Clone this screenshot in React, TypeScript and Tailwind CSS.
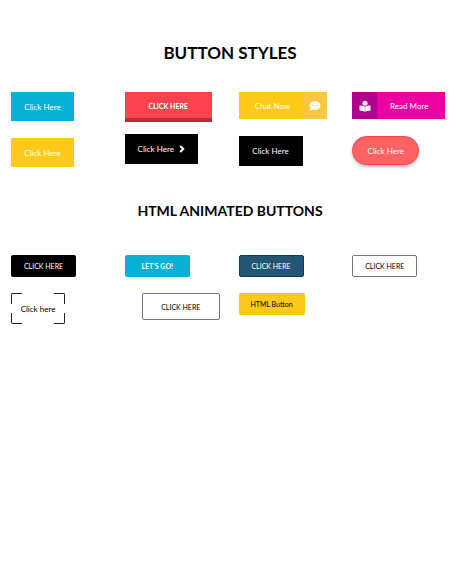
import { ReactNode } from "react";
import { clsx } from "clsx";

interface DemoButtonProps {
  className: string;
  children: ReactNode;
}

function DemoButton({ className, children }: DemoButtonProps) {
  return (
    <button
      type="button"
      className={clsx(
        "flex items-center justify-center whitespace-nowrap cursor-pointer",
        className
      )}
    >
      {children}
    </button>
  );
}

function Column({ className, children }: DemoButtonProps) {
  return (
    <div className={clsx("flex flex-col items-start", className)}>
      {children}
    </div>
  );
}

function ChatIcon() {
  return (
    <svg viewBox="0 0 12 10" className="w-3 h-[10px]" aria-hidden="true">
      <path
        d="M6 .3C3 .3.6 2.2.6 4.6c0 1 .4 1.9 1.1 2.6L.5 9.3c1.3 0 2.3-.4 3-.9.8.3 1.6.4 2.5.4 3 0 5.4-1.9 5.4-4.2S9 .3 6 .3z"
        fill="#fff"
      />
      <g fill="#ffc545">
        <circle cx="3.6" cy="4.6" r=".6" />
        <circle cx="6" cy="4.6" r=".6" />
        <circle cx="8.4" cy="4.6" r=".6" />
      </g>
    </svg>
  );
}

function ReaderIcon() {
  return (
    <svg viewBox="0 0 12 12" className="w-3 h-3" aria-hidden="true">
      <g fill="#fff">
        <circle cx="6" cy="3.2" r="2.5" />
        <path d="M5.8 6.8C4.4 6 2.600 5.600 1 5.600c-.3 0-.5.2-.5.5v4.200c0 .3.200.5.500.5 1.600 0 3.500.3 4.800.9zM6.200 6.800C7.600 6 9.400 5.600 11 5.600c.3 0 .5.2.5.5v4.200c0 .3-.2.5-.5.5-1.600 0-3.500.3-4.800.9z" />
      </g>
    </svg>
  );
}

function ChevronIcon() {
  return (
    <svg viewBox="0 0 6 8" className="w-[6px] h-2" aria-hidden="true">
      <path
        d="M1.2 1 4.2 4l-3 3"
        fill="none"
        stroke="#fff"
        strokeWidth="2"
      />
    </svg>
  );
}

// The four L-shaped corners of the bracket button
const CORNERS = [
  "top-0 left-0 border-t border-l rounded-tl-xs",
  "top-0 right-0 border-t border-r rounded-tr-xs",
  "bottom-0 left-0 border-b border-l rounded-bl-xs",
  "bottom-0 right-0 border-b border-r rounded-br-xs"
];

export default function App() {
  return (
    <main className="min-h-screen bg-white pt-[41px] font-['Lato',sans-serif] text-[8px] leading-[10px] text-black">
      <section>
        <h2 className="text-center text-[17px] leading-6 font-bold">
          BUTTON STYLES
        </h2>
        <div className="mt-[27px] grid grid-cols-4 gap-[6px] pl-[11px]">
          <Column className="gap-[17px]">
            <DemoButton className="h-[29px] w-[63px] bg-[#06b1d5] text-white">
              Click Here
            </DemoButton>
            <DemoButton className="h-[29px] w-[63px] rounded-[1px] bg-[#ffc917] text-white">
              Click Here
            </DemoButton>
          </Column>
          <Column className="gap-3">
            <DemoButton className="h-[30px] w-[87px] border-b-4 border-[#b92c3c] bg-[#ff4250] pt-[2px] text-[7px] font-bold text-white">
              CLICK HERE
            </DemoButton>
            <DemoButton className="h-[30px] w-[73px] gap-[5px] bg-black text-white">
              Click Here
              <ChevronIcon />
            </DemoButton>
          </Column>
          <Column className="gap-[17px]">
            <DemoButton className="h-[27px] bg-[#ffc917] text-white">
              <span className="w-16 pl-1">Chat Now</span>
              <span className="flex h-full w-6 items-center justify-center bg-[#ffc545]">
                <ChatIcon />
              </span>
            </DemoButton>
            <DemoButton className="h-[30px] w-16 bg-black text-white">
              Click Here
            </DemoButton>
          </Column>
          <Column className="gap-[17px]">
            <DemoButton className="h-[27px] bg-[#ec00a2] text-white">
              <span className="flex h-full w-[25px] items-center justify-center bg-[#b0008f]">
                <ReaderIcon />
              </span>
              <span className="w-[68px] pr-1">Read More</span>
            </DemoButton>
            <DemoButton className="h-[29px] w-[67px] rounded-full border border-[#ff4250] bg-[#ff6262] text-white shadow-[0_2px_3px_#00000040]">
              Click Here
            </DemoButton>
          </Column>
        </div>
      </section>

      <section className="mt-[34px]">
        <h2 className="text-center text-[14px] leading-5 font-bold">
          HTML ANIMATED BUTTONS
        </h2>
        <div className="mt-[34px] grid grid-cols-4 gap-[6px] pl-[11px]">
          <Column className="gap-4">
            <DemoButton className="h-[22px] w-[65px] rounded-xs bg-black text-[7px] text-white">
              CLICK HERE
            </DemoButton>
            <DemoButton className="relative h-[31px] w-[54px]">
              {CORNERS.map((corner) => (
                <span
                  key={corner}
                  className={clsx(
                    "absolute size-[11px] border-[#222222]",
                    corner
                  )}
                />
              ))}
              Click here
            </DemoButton>
          </Column>
          <Column className="gap-4">
            <DemoButton className="h-[22px] w-[65px] rounded-xs bg-[#06b1d5] text-[7px] font-bold text-white">
              LET'S GO!
            </DemoButton>
            <DemoButton className="ml-[17px] h-[27px] w-[78px] rounded-xs border border-[#777777] text-[7px]">
              CLICK HERE
            </DemoButton>
          </Column>
          <Column className="gap-4">
            <DemoButton className="h-[22px] w-[65px] rounded-xs border border-[#123a62] bg-[#235674] text-[7px] text-white">
              CLICK HERE
            </DemoButton>
            <DemoButton className="h-[22px] w-[66px] rounded-xs bg-[#ffc917] text-[7px]">
              HTML Button
            </DemoButton>
          </Column>
          <Column className="gap-4">
            <DemoButton className="h-[22px] w-[65px] rounded-xs border border-[#777777] text-[7px]">
              CLICK HERE
            </DemoButton>
          </Column>
        </div>
      </section>
    </main>
  );
}
